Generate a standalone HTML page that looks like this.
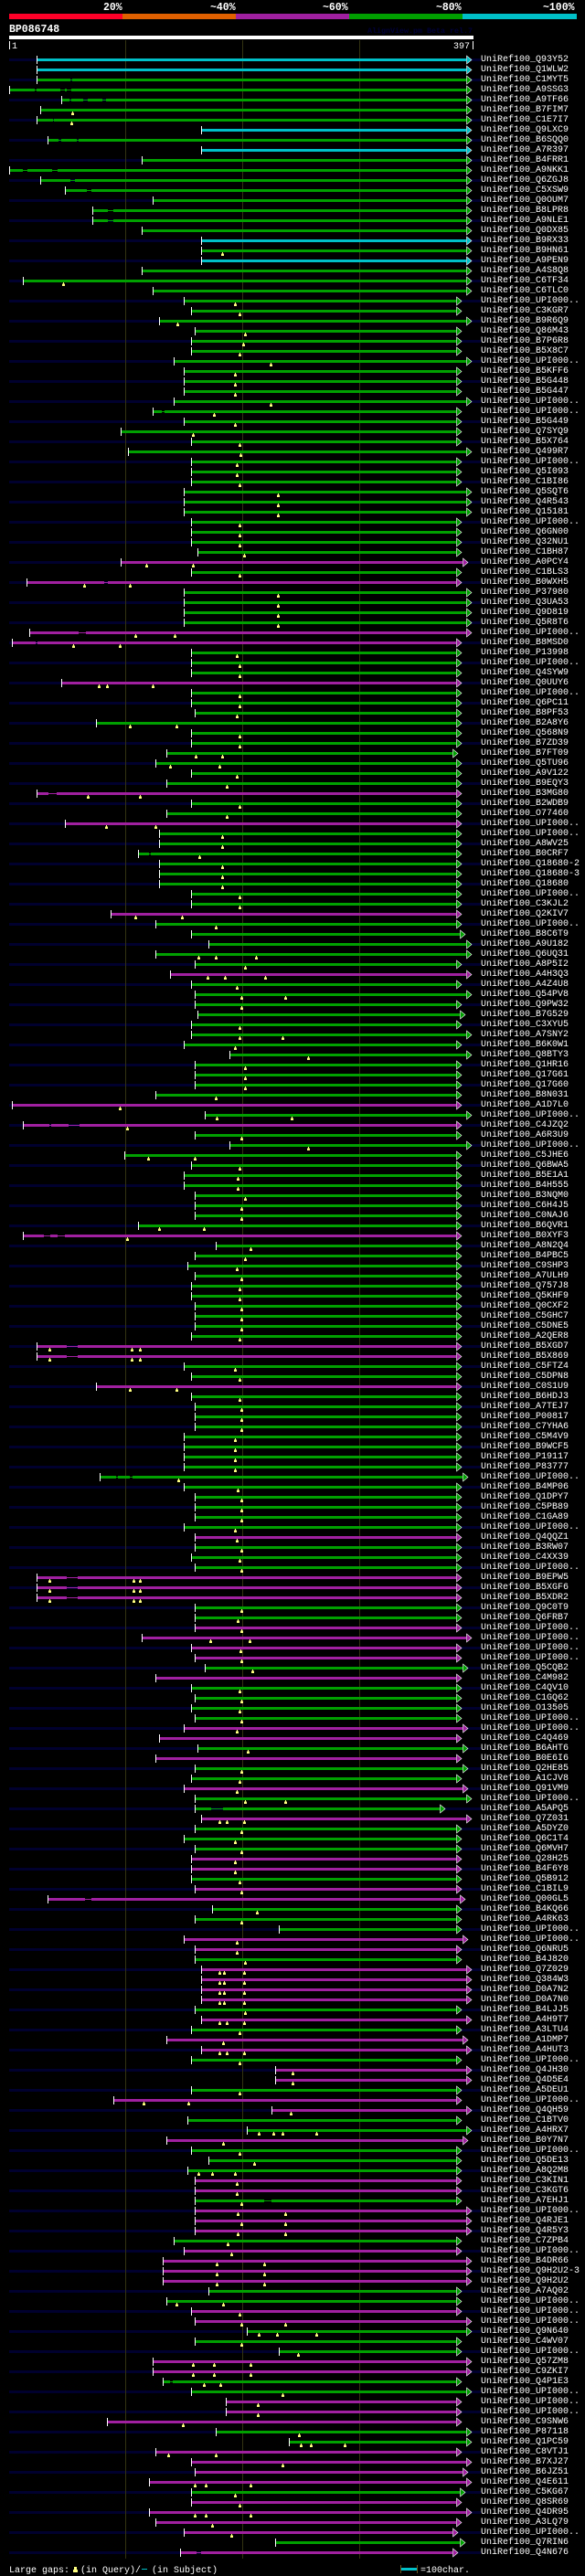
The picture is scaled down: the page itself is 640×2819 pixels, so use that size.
<!DOCTYPE html>
<html><head><meta charset="utf-8"><title>BP086748</title>
<style>
html,body{margin:0;padding:0;background:#000}
#p{position:relative;width:640px;height:2819px;overflow:hidden;background:#000}
#nv{position:absolute;left:10px;top:64px;width:516px;height:2732px;background:repeating-linear-gradient(to bottom,#00002e 0,#00002e 3px,transparent 3px,transparent 22px)}
svg{position:absolute;left:0;top:0}
.g,.m,.c{stroke:currentColor;stroke-width:3;fill:none}
.g{color:#00a000}.m{color:#a020a0}.c{color:#00c0c8}
.n{stroke-width:1}
text{font-family:"Liberation Mono",monospace;fill:#fff;font-size:10px}
.b{font-weight:bold;font-size:11.5px}
pre{position:absolute;left:526px;top:60px;margin:0;font:10px/11px "Liberation Mono",monospace;color:#fff}
</style></head><body><div id="p">
<div id="nv"></div>
<svg width="640" height="2819">
<defs>
<path id="t" d="M.5-4.5v9" stroke="#fff" stroke-width="1"/>
<path id="a" d="M.5-4.5V4.5L6 0Z" fill="currentColor" stroke="#fff" stroke-width=".6"/>
<path id="y" d="M-1 5.5h3V3h-1V1.5h-1V3h-1z" fill="#ffff80" stroke="none"/>
</defs>
<rect x="10" y="15" width="124" height="6" fill="#ff0028"/>
<rect x="134" y="15" width="124" height="6" fill="#e06000"/>
<rect x="258" y="15" width="124" height="6" fill="#a020a0"/>
<rect x="382" y="15" width="124" height="6" fill="#00a000"/>
<rect x="506" y="15" width="125" height="6" fill="#00c0c8"/>
<text class="b" x="113" y="11">20%</text>
<text class="b" x="230" y="11">~40%</text>
<text class="b" x="353" y="11">~60%</text>
<text class="b" x="477" y="11">~80%</text>
<text class="b" x="594" y="11">~100%</text>
<text class="b" x="10" y="35">BP086748</text>
<text x="402" y="36" style="font-size:8.33px;font-weight:bold;fill:#00003a">AlignView.pm Beta rel.7</text>
<rect x="10" y="39" width="508" height="4" fill="#fff"/>
<rect x="10" y="45" width="1" height="9" fill="#fff"/>
<text x="13" y="53">1</text>
<text x="496" y="53">397</text>
<rect x="517" y="45" width="1" height="9" fill="#fff"/>
<rect x="137" y="44" width="1" height="2756" fill="#333311"/>
<rect x="265" y="44" width="1" height="2756" fill="#333311"/>
<rect x="393" y="44" width="1" height="2756" fill="#333311"/>

<g class=c transform=translate(0,65.5)><path d="M41 0H510"/><use href=#t x=40 /><use href=#a x=510 /></g>
<g class=c transform=translate(0,76.5)><path d="M41 0H510"/><use href=#t x=40 /><use href=#a x=510 /></g>
<g class=g transform=translate(0,87.5)><path d="M41 0H77M79 0H510"/><path class=n d="M77 0H79"/><use href=#t x=40 /><use href=#a x=510 /></g>
<g class=g transform=translate(0,98.5)><path d="M11 0H38M40 0H66M71 0H73M78 0H510"/><path class=n d="M38 0H40M66 0H71M73 0H78"/><use href=#t x=10 /><use href=#a x=510 /></g>
<g class=g transform=translate(0,109.5)><path d="M68 0H76M78 0H91M96 0H112M116 0H510"/><path class=n d="M76 0H78M91 0H96M112 0H116"/><use href=#t x=67 /><use href=#a x=510 /></g>
<g class=g transform=translate(0,120.5)><path d="M45 0H510"/><use href=#t x=44 /><use href=#a x=510 /><use href=#y x=79 /></g>
<g class=g transform=translate(0,131.5)><path d="M41 0H58M59 0H510"/><path class=n d="M58 0H59"/><use href=#t x=40 /><use href=#a x=510 /><use href=#y x=78 /></g>
<g class=c transform=translate(0,142.5)><path d="M221 0H510"/><use href=#t x=220 /><use href=#a x=510 /></g>
<g class=g transform=translate(0,153.5)><path d="M53 0H64M67 0H84M86 0H510"/><path class=n d="M64 0H67M84 0H86"/><use href=#t x=52 /><use href=#a x=510 /></g>
<g class=c transform=translate(0,164.5)><path d="M221 0H510"/><use href=#t x=220 /><use href=#a x=510 /></g>
<g class=g transform=translate(0,175.5)><path d="M156 0H510"/><use href=#t x=155 /><use href=#a x=510 /></g>
<g class=g transform=translate(0,186.5)><path d="M11 0H25M30 0H57M63 0H510"/><path class=n d="M25 0H30M57 0H63"/><use href=#t x=10 /><use href=#a x=510 /></g>
<g class=g transform=translate(0,197.5)><path d="M45 0H77M82 0H510"/><path class=n d="M77 0H82"/><use href=#t x=44 /><use href=#a x=510 /></g>
<g class=g transform=translate(0,208.5)><path d="M72 0H95M100 0H510"/><path class=n d="M95 0H100"/><use href=#t x=71 /><use href=#a x=510 /></g>
<g class=g transform=translate(0,219.5)><path d="M168 0H510"/><use href=#t x=167 /><use href=#a x=510 /></g>
<g class=g transform=translate(0,230.5)><path d="M102 0H118M124 0H510"/><path class=n d="M118 0H124"/><use href=#t x=101 /><use href=#a x=510 /></g>
<g class=g transform=translate(0,241.5)><path d="M102 0H118M124 0H510"/><path class=n d="M118 0H124"/><use href=#t x=101 /><use href=#a x=510 /></g>
<g class=g transform=translate(0,252.5)><path d="M156 0H510"/><use href=#t x=155 /><use href=#a x=510 /></g>
<g class=c transform=translate(0,263.5)><path d="M221 0H510"/><use href=#t x=220 /><use href=#a x=510 /></g>
<g class=g transform=translate(0,274.5)><path d="M221 0H510"/><use href=#t x=220 /><use href=#a x=510 /><use href=#y x=243 /></g>
<g class=c transform=translate(0,285.5)><path d="M221 0H510"/><use href=#t x=220 /><use href=#a x=510 /></g>
<g class=g transform=translate(0,296.5)><path d="M156 0H510"/><use href=#t x=155 /><use href=#a x=510 /></g>
<g class=g transform=translate(0,307.5)><path d="M26 0H510"/><use href=#t x=25 /><use href=#a x=510 /><use href=#y x=69 /></g>
<g class=g transform=translate(0,318.5)><path d="M168 0H510"/><use href=#t x=167 /><use href=#a x=510 /></g>
<g class=g transform=translate(0,329.5)><path d="M202 0H499"/><use href=#t x=201 /><use href=#a x=499 /><use href=#y x=257 /></g>
<g class=g transform=translate(0,340.5)><path d="M210 0H499"/><use href=#t x=209 /><use href=#a x=499 /><use href=#y x=262 /></g>
<g class=g transform=translate(0,351.5)><path d="M175 0H510"/><use href=#t x=174 /><use href=#a x=510 /><use href=#y x=194 /></g>
<g class=g transform=translate(0,362.5)><path d="M214 0H499"/><use href=#t x=213 /><use href=#a x=499 /><use href=#y x=268 /></g>
<g class=g transform=translate(0,373.5)><path d="M210 0H499"/><use href=#t x=209 /><use href=#a x=499 /><use href=#y x=266 /></g>
<g class=g transform=translate(0,384.5)><path d="M210 0H499"/><use href=#t x=209 /><use href=#a x=499 /><use href=#y x=262 /></g>
<g class=g transform=translate(0,395.5)><path d="M191 0H510"/><use href=#t x=190 /><use href=#a x=510 /><use href=#y x=296 /></g>
<g class=g transform=translate(0,406.5)><path d="M202 0H499"/><use href=#t x=201 /><use href=#a x=499 /><use href=#y x=257 /></g>
<g class=g transform=translate(0,417.5)><path d="M202 0H499"/><use href=#t x=201 /><use href=#a x=499 /><use href=#y x=257 /></g>
<g class=g transform=translate(0,428.5)><path d="M202 0H499"/><use href=#t x=201 /><use href=#a x=499 /><use href=#y x=257 /></g>
<g class=g transform=translate(0,439.5)><path d="M191 0H510"/><use href=#t x=190 /><use href=#a x=510 /><use href=#y x=296 /></g>
<g class=g transform=translate(0,450.5)><path d="M168 0H177M180 0H499"/><path class=n d="M177 0H180"/><use href=#t x=167 /><use href=#a x=499 /><use href=#y x=234 /></g>
<g class=g transform=translate(0,461.5)><path d="M202 0H499"/><use href=#t x=201 /><use href=#a x=499 /><use href=#y x=257 /></g>
<g class=g transform=translate(0,472.5)><path d="M133 0H499"/><use href=#t x=132 /><use href=#a x=499 /><use href=#y x=211 /></g>
<g class=g transform=translate(0,483.5)><path d="M210 0H499"/><use href=#t x=209 /><use href=#a x=499 /><use href=#y x=262 /></g>
<g class=g transform=translate(0,494.5)><path d="M141 0H510"/><use href=#t x=140 /><use href=#a x=510 /><use href=#y x=263 /></g>
<g class=g transform=translate(0,505.5)><path d="M210 0H499"/><use href=#t x=209 /><use href=#a x=499 /><use href=#y x=259 /></g>
<g class=g transform=translate(0,516.5)><path d="M210 0H499"/><use href=#t x=209 /><use href=#a x=499 /><use href=#y x=259 /></g>
<g class=g transform=translate(0,527.5)><path d="M210 0H499"/><use href=#t x=209 /><use href=#a x=499 /><use href=#y x=262 /></g>
<g class=g transform=translate(0,538.5)><path d="M202 0H510"/><use href=#t x=201 /><use href=#a x=510 /><use href=#y x=304 /></g>
<g class=g transform=translate(0,549.5)><path d="M202 0H510"/><use href=#t x=201 /><use href=#a x=510 /><use href=#y x=304 /></g>
<g class=g transform=translate(0,560.5)><path d="M202 0H510"/><use href=#t x=201 /><use href=#a x=510 /><use href=#y x=304 /></g>
<g class=g transform=translate(0,571.5)><path d="M210 0H499"/><use href=#t x=209 /><use href=#a x=499 /><use href=#y x=262 /></g>
<g class=g transform=translate(0,582.5)><path d="M210 0H499"/><use href=#t x=209 /><use href=#a x=499 /><use href=#y x=262 /></g>
<g class=g transform=translate(0,593.5)><path d="M210 0H499"/><use href=#t x=209 /><use href=#a x=499 /><use href=#y x=262 /></g>
<g class=g transform=translate(0,604.5)><path d="M217 0H499"/><use href=#t x=216 /><use href=#a x=499 /><use href=#y x=267 /></g>
<g class=m transform=translate(0,615.5)><path d="M133 0H506"/><use href=#t x=132 /><use href=#a x=506 /><use href=#y x=160 /><use href=#y x=211 /></g>
<g class=g transform=translate(0,626.5)><path d="M210 0H499"/><use href=#t x=209 /><use href=#a x=499 /><use href=#y x=262 /></g>
<g class=m transform=translate(0,637.5)><path d="M30 0H114M118 0H499"/><path class=n d="M114 0H118"/><use href=#t x=29 /><use href=#a x=499 /><use href=#y x=92 /><use href=#y x=142 /></g>
<g class=g transform=translate(0,648.5)><path d="M202 0H510"/><use href=#t x=201 /><use href=#a x=510 /><use href=#y x=304 /></g>
<g class=g transform=translate(0,659.5)><path d="M202 0H510"/><use href=#t x=201 /><use href=#a x=510 /><use href=#y x=304 /></g>
<g class=g transform=translate(0,670.5)><path d="M202 0H510"/><use href=#t x=201 /><use href=#a x=510 /><use href=#y x=304 /></g>
<g class=g transform=translate(0,681.5)><path d="M202 0H510"/><use href=#t x=201 /><use href=#a x=510 /><use href=#y x=304 /></g>
<g class=m transform=translate(0,692.5)><path d="M33 0H86M94 0H510"/><path class=n d="M86 0H94"/><use href=#t x=32 /><use href=#a x=510 /><use href=#y x=148 /><use href=#y x=191 /></g>
<g class=m transform=translate(0,703.5)><path d="M14 0H39M41 0H499"/><path class=n d="M39 0H41"/><use href=#t x=13 /><use href=#a x=499 /><use href=#y x=80 /><use href=#y x=131 /></g>
<g class=g transform=translate(0,714.5)><path d="M210 0H499"/><use href=#t x=209 /><use href=#a x=499 /><use href=#y x=259 /></g>
<g class=g transform=translate(0,725.5)><path d="M210 0H499"/><use href=#t x=209 /><use href=#a x=499 /><use href=#y x=262 /></g>
<g class=g transform=translate(0,736.5)><path d="M210 0H499"/><use href=#t x=209 /><use href=#a x=499 /><use href=#y x=262 /></g>
<g class=m transform=translate(0,747.5)><path d="M68 0H499"/><use href=#t x=67 /><use href=#a x=499 /><use href=#y x=108 /><use href=#y x=117 /><use href=#y x=167 /></g>
<g class=g transform=translate(0,758.5)><path d="M210 0H499"/><use href=#t x=209 /><use href=#a x=499 /><use href=#y x=262 /></g>
<g class=g transform=translate(0,769.5)><path d="M210 0H499"/><use href=#t x=209 /><use href=#a x=499 /><use href=#y x=262 /></g>
<g class=g transform=translate(0,780.5)><path d="M214 0H499"/><use href=#t x=213 /><use href=#a x=499 /><use href=#y x=259 /></g>
<g class=g transform=translate(0,791.5)><path d="M106 0H499"/><use href=#t x=105 /><use href=#a x=499 /><use href=#y x=142 /><use href=#y x=193 /></g>
<g class=g transform=translate(0,802.5)><path d="M210 0H499"/><use href=#t x=209 /><use href=#a x=499 /><use href=#y x=262 /></g>
<g class=g transform=translate(0,813.5)><path d="M210 0H499"/><use href=#t x=209 /><use href=#a x=499 /><use href=#y x=262 /></g>
<g class=g transform=translate(0,824.5)><path d="M183 0H495"/><use href=#t x=182 /><use href=#a x=495 /><use href=#y x=214 /><use href=#y x=243 /></g>
<g class=g transform=translate(0,835.5)><path d="M171 0H499"/><use href=#t x=170 /><use href=#a x=499 /><use href=#y x=186 /><use href=#y x=240 /></g>
<g class=g transform=translate(0,846.5)><path d="M210 0H499"/><use href=#t x=209 /><use href=#a x=499 /><use href=#y x=259 /></g>
<g class=g transform=translate(0,857.5)><path d="M183 0H499"/><use href=#t x=182 /><use href=#a x=499 /><use href=#y x=248 /></g>
<g class=m transform=translate(0,868.5)><path d="M41 0H53M62 0H499"/><path class=n d="M53 0H62"/><use href=#t x=40 /><use href=#a x=499 /><use href=#y x=96 /><use href=#y x=153 /></g>
<g class=g transform=translate(0,879.5)><path d="M210 0H499"/><use href=#t x=209 /><use href=#a x=499 /><use href=#y x=262 /></g>
<g class=g transform=translate(0,890.5)><path d="M183 0H499"/><use href=#t x=182 /><use href=#a x=499 /><use href=#y x=248 /></g>
<g class=m transform=translate(0,901.5)><path d="M72 0H499"/><use href=#t x=71 /><use href=#a x=499 /><use href=#y x=116 /><use href=#y x=170 /></g>
<g class=g transform=translate(0,912.5)><path d="M175 0H499"/><use href=#t x=174 /><use href=#a x=499 /><use href=#y x=243 /></g>
<g class=g transform=translate(0,923.5)><path d="M175 0H499"/><use href=#t x=174 /><use href=#a x=499 /><use href=#y x=243 /></g>
<g class=g transform=translate(0,934.5)><path d="M152 0H163M165 0H499"/><path class=n d="M163 0H165"/><use href=#t x=151 /><use href=#a x=499 /><use href=#y x=218 /></g>
<g class=g transform=translate(0,945.5)><path d="M175 0H499"/><use href=#t x=174 /><use href=#a x=499 /><use href=#y x=243 /></g>
<g class=g transform=translate(0,956.5)><path d="M175 0H499"/><use href=#t x=174 /><use href=#a x=499 /><use href=#y x=243 /></g>
<g class=g transform=translate(0,967.5)><path d="M175 0H499"/><use href=#t x=174 /><use href=#a x=499 /><use href=#y x=243 /></g>
<g class=g transform=translate(0,978.5)><path d="M210 0H499"/><use href=#t x=209 /><use href=#a x=499 /><use href=#y x=262 /></g>
<g class=g transform=translate(0,989.5)><path d="M210 0H499"/><use href=#t x=209 /><use href=#a x=499 /><use href=#y x=262 /></g>
<g class=m transform=translate(0,1000.5)><path d="M122 0H499"/><use href=#t x=121 /><use href=#a x=499 /><use href=#y x=148 /><use href=#y x=199 /></g>
<g class=g transform=translate(0,1011.5)><path d="M171 0H499"/><use href=#t x=170 /><use href=#a x=499 /><use href=#y x=236 /></g>
<g class=g transform=translate(0,1022.5)><path d="M210 0H503"/><use href=#t x=209 /><use href=#a x=503 /></g>
<g class=g transform=translate(0,1033.5)><path d="M229 0H510"/><use href=#t x=228 /><use href=#a x=510 /></g>
<g class=g transform=translate(0,1044.5)><path d="M171 0H510"/><use href=#t x=170 /><use href=#a x=510 /><use href=#y x=217 /><use href=#y x=236 /><use href=#y x=280 /></g>
<g class=g transform=translate(0,1055.5)><path d="M214 0H499"/><use href=#t x=213 /><use href=#a x=499 /><use href=#y x=268 /></g>
<g class=m transform=translate(0,1066.5)><path d="M187 0H510"/><use href=#t x=186 /><use href=#a x=510 /><use href=#y x=227 /><use href=#y x=246 /><use href=#y x=290 /></g>
<g class=g transform=translate(0,1077.5)><path d="M210 0H499"/><use href=#t x=209 /><use href=#a x=499 /><use href=#y x=259 /></g>
<g class=g transform=translate(0,1088.5)><path d="M214 0H510"/><use href=#t x=213 /><use href=#a x=510 /><use href=#y x=264 /><use href=#y x=312 /></g>
<g class=g transform=translate(0,1099.5)><path d="M214 0H499"/><use href=#t x=213 /><use href=#a x=499 /><use href=#y x=264 /></g>
<g class=g transform=translate(0,1110.5)><path d="M217 0H503"/><use href=#t x=216 /><use href=#a x=503 /></g>
<g class=g transform=translate(0,1121.5)><path d="M210 0H499"/><use href=#t x=209 /><use href=#a x=499 /><use href=#y x=262 /></g>
<g class=g transform=translate(0,1132.5)><path d="M210 0H510"/><use href=#t x=209 /><use href=#a x=510 /><use href=#y x=262 /><use href=#y x=309 /></g>
<g class=g transform=translate(0,1143.5)><path d="M202 0H499"/><use href=#t x=201 /><use href=#a x=499 /><use href=#y x=257 /></g>
<g class=g transform=translate(0,1154.5)><path d="M252 0H510"/><use href=#t x=251 /><use href=#a x=510 /><use href=#y x=337 /></g>
<g class=g transform=translate(0,1165.5)><path d="M214 0H499"/><use href=#t x=213 /><use href=#a x=499 /><use href=#y x=268 /></g>
<g class=g transform=translate(0,1176.5)><path d="M214 0H499"/><use href=#t x=213 /><use href=#a x=499 /><use href=#y x=268 /></g>
<g class=g transform=translate(0,1187.5)><path d="M214 0H499"/><use href=#t x=213 /><use href=#a x=499 /><use href=#y x=268 /></g>
<g class=g transform=translate(0,1198.5)><path d="M171 0H499"/><use href=#t x=170 /><use href=#a x=499 /><use href=#y x=236 /></g>
<g class=m transform=translate(0,1209.5)><path d="M14 0H499"/><use href=#t x=13 /><use href=#a x=499 /><use href=#y x=131 /></g>
<g class=g transform=translate(0,1220.5)><path d="M225 0H510"/><use href=#t x=224 /><use href=#a x=510 /><use href=#y x=237 /><use href=#y x=319 /></g>
<g class=m transform=translate(0,1231.5)><path d="M26 0H54M56 0H75M87 0H499"/><path class=n d="M54 0H56M75 0H87"/><use href=#t x=25 /><use href=#a x=499 /><use href=#y x=139 /></g>
<g class=g transform=translate(0,1242.5)><path d="M214 0H499"/><use href=#t x=213 /><use href=#a x=499 /><use href=#y x=264 /></g>
<g class=g transform=translate(0,1253.5)><path d="M252 0H510"/><use href=#t x=251 /><use href=#a x=510 /><use href=#y x=337 /></g>
<g class=g transform=translate(0,1264.5)><path d="M137 0H499"/><use href=#t x=136 /><use href=#a x=499 /><use href=#y x=162 /><use href=#y x=213 /></g>
<g class=g transform=translate(0,1275.5)><path d="M210 0H499"/><use href=#t x=209 /><use href=#a x=499 /><use href=#y x=262 /></g>
<g class=g transform=translate(0,1286.5)><path d="M202 0H499"/><use href=#t x=201 /><use href=#a x=499 /><use href=#y x=260 /></g>
<g class=g transform=translate(0,1297.5)><path d="M202 0H499"/><use href=#t x=201 /><use href=#a x=499 /><use href=#y x=260 /></g>
<g class=g transform=translate(0,1308.5)><path d="M214 0H499"/><use href=#t x=213 /><use href=#a x=499 /><use href=#y x=268 /></g>
<g class=g transform=translate(0,1319.5)><path d="M214 0H499"/><use href=#t x=213 /><use href=#a x=499 /><use href=#y x=264 /></g>
<g class=g transform=translate(0,1330.5)><path d="M214 0H499"/><use href=#t x=213 /><use href=#a x=499 /><use href=#y x=264 /></g>
<g class=g transform=translate(0,1341.5)><path d="M152 0H499"/><use href=#t x=151 /><use href=#a x=499 /><use href=#y x=174 /><use href=#y x=223 /></g>
<g class=m transform=translate(0,1352.5)><path d="M26 0H48M55 0H63M71 0H499"/><path class=n d="M48 0H55M63 0H71"/><use href=#t x=25 /><use href=#a x=499 /><use href=#y x=139 /></g>
<g class=g transform=translate(0,1363.5)><path d="M237 0H499"/><use href=#t x=236 /><use href=#a x=499 /><use href=#y x=274 /></g>
<g class=g transform=translate(0,1374.5)><path d="M214 0H499"/><use href=#t x=213 /><use href=#a x=499 /><use href=#y x=268 /></g>
<g class=g transform=translate(0,1385.5)><path d="M206 0H499"/><use href=#t x=205 /><use href=#a x=499 /><use href=#y x=259 /></g>
<g class=g transform=translate(0,1396.5)><path d="M214 0H499"/><use href=#t x=213 /><use href=#a x=499 /><use href=#y x=264 /></g>
<g class=g transform=translate(0,1407.5)><path d="M210 0H499"/><use href=#t x=209 /><use href=#a x=499 /><use href=#y x=262 /></g>
<g class=g transform=translate(0,1418.5)><path d="M210 0H499"/><use href=#t x=209 /><use href=#a x=499 /><use href=#y x=262 /></g>
<g class=g transform=translate(0,1429.5)><path d="M214 0H499"/><use href=#t x=213 /><use href=#a x=499 /><use href=#y x=264 /></g>
<g class=g transform=translate(0,1440.5)><path d="M214 0H499"/><use href=#t x=213 /><use href=#a x=499 /><use href=#y x=264 /></g>
<g class=g transform=translate(0,1451.5)><path d="M214 0H499"/><use href=#t x=213 /><use href=#a x=499 /><use href=#y x=264 /></g>
<g class=g transform=translate(0,1462.5)><path d="M210 0H499"/><use href=#t x=209 /><use href=#a x=499 /><use href=#y x=262 /></g>
<g class=m transform=translate(0,1473.5)><path d="M41 0H73M85 0H499"/><path class=n d="M73 0H85"/><use href=#t x=40 /><use href=#a x=499 /><use href=#y x=54 /><use href=#y x=144 /><use href=#y x=153 /></g>
<g class=m transform=translate(0,1484.5)><path d="M41 0H73M85 0H499"/><path class=n d="M73 0H85"/><use href=#t x=40 /><use href=#a x=499 /><use href=#y x=54 /><use href=#y x=144 /><use href=#y x=153 /></g>
<g class=g transform=translate(0,1495.5)><path d="M202 0H499"/><use href=#t x=201 /><use href=#a x=499 /><use href=#y x=257 /></g>
<g class=g transform=translate(0,1506.5)><path d="M210 0H499"/><use href=#t x=209 /><use href=#a x=499 /><use href=#y x=262 /></g>
<g class=m transform=translate(0,1517.5)><path d="M106 0H499"/><use href=#t x=105 /><use href=#a x=499 /><use href=#y x=142 /><use href=#y x=193 /></g>
<g class=g transform=translate(0,1528.5)><path d="M210 0H499"/><use href=#t x=209 /><use href=#a x=499 /><use href=#y x=262 /></g>
<g class=g transform=translate(0,1539.5)><path d="M214 0H499"/><use href=#t x=213 /><use href=#a x=499 /><use href=#y x=264 /></g>
<g class=g transform=translate(0,1550.5)><path d="M214 0H499"/><use href=#t x=213 /><use href=#a x=499 /><use href=#y x=264 /></g>
<g class=g transform=translate(0,1561.5)><path d="M214 0H499"/><use href=#t x=213 /><use href=#a x=499 /><use href=#y x=264 /></g>
<g class=g transform=translate(0,1572.5)><path d="M202 0H499"/><use href=#t x=201 /><use href=#a x=499 /><use href=#y x=257 /></g>
<g class=g transform=translate(0,1583.5)><path d="M202 0H499"/><use href=#t x=201 /><use href=#a x=499 /><use href=#y x=257 /></g>
<g class=g transform=translate(0,1594.5)><path d="M202 0H499"/><use href=#t x=201 /><use href=#a x=499 /><use href=#y x=257 /></g>
<g class=g transform=translate(0,1605.5)><path d="M202 0H499"/><use href=#t x=201 /><use href=#a x=499 /><use href=#y x=257 /></g>
<g class=g transform=translate(0,1616.5)><path d="M110 0H127M129 0H142M145 0H506"/><path class=n d="M127 0H129M142 0H145"/><use href=#t x=109 /><use href=#a x=506 /><use href=#y x=195 /></g>
<g class=g transform=translate(0,1627.5)><path d="M202 0H499"/><use href=#t x=201 /><use href=#a x=499 /><use href=#y x=260 /></g>
<g class=g transform=translate(0,1638.5)><path d="M214 0H499"/><use href=#t x=213 /><use href=#a x=499 /><use href=#y x=264 /></g>
<g class=g transform=translate(0,1649.5)><path d="M214 0H499"/><use href=#t x=213 /><use href=#a x=499 /><use href=#y x=264 /></g>
<g class=g transform=translate(0,1660.5)><path d="M214 0H499"/><use href=#t x=213 /><use href=#a x=499 /><use href=#y x=264 /></g>
<g class=g transform=translate(0,1671.5)><path d="M202 0H499"/><use href=#t x=201 /><use href=#a x=499 /><use href=#y x=257 /></g>
<g class=m transform=translate(0,1682.5)><path d="M214 0H499"/><use href=#t x=213 /><use href=#a x=499 /><use href=#y x=259 /></g>
<g class=g transform=translate(0,1693.5)><path d="M214 0H499"/><use href=#t x=213 /><use href=#a x=499 /><use href=#y x=264 /></g>
<g class=g transform=translate(0,1704.5)><path d="M210 0H499"/><use href=#t x=209 /><use href=#a x=499 /><use href=#y x=262 /></g>
<g class=g transform=translate(0,1715.5)><path d="M214 0H499"/><use href=#t x=213 /><use href=#a x=499 /><use href=#y x=264 /></g>
<g class=m transform=translate(0,1726.5)><path d="M41 0H73M85 0H499"/><path class=n d="M73 0H85"/><use href=#t x=40 /><use href=#a x=499 /><use href=#y x=54 /><use href=#y x=146 /><use href=#y x=153 /></g>
<g class=m transform=translate(0,1737.5)><path d="M41 0H73M85 0H499"/><path class=n d="M73 0H85"/><use href=#t x=40 /><use href=#a x=499 /><use href=#y x=54 /><use href=#y x=146 /><use href=#y x=153 /></g>
<g class=m transform=translate(0,1748.5)><path d="M41 0H73M85 0H499"/><path class=n d="M73 0H85"/><use href=#t x=40 /><use href=#a x=499 /><use href=#y x=54 /><use href=#y x=146 /><use href=#y x=153 /></g>
<g class=g transform=translate(0,1759.5)><path d="M214 0H499"/><use href=#t x=213 /><use href=#a x=499 /><use href=#y x=264 /></g>
<g class=g transform=translate(0,1770.5)><path d="M214 0H499"/><use href=#t x=213 /><use href=#a x=499 /><use href=#y x=260 /></g>
<g class=m transform=translate(0,1781.5)><path d="M214 0H499"/><use href=#t x=213 /><use href=#a x=499 /><use href=#y x=264 /></g>
<g class=m transform=translate(0,1792.5)><path d="M156 0H510"/><use href=#t x=155 /><use href=#a x=510 /><use href=#y x=230 /><use href=#y x=273 /></g>
<g class=m transform=translate(0,1803.5)><path d="M210 0H499"/><use href=#t x=209 /><use href=#a x=499 /><use href=#y x=263 /></g>
<g class=m transform=translate(0,1814.5)><path d="M214 0H499"/><use href=#t x=213 /><use href=#a x=499 /><use href=#y x=264 /></g>
<g class=g transform=translate(0,1825.5)><path d="M225 0H506"/><use href=#t x=224 /><use href=#a x=506 /><use href=#y x=276 /></g>
<g class=m transform=translate(0,1836.5)><path d="M171 0H499"/><use href=#t x=170 /><use href=#a x=499 /></g>
<g class=g transform=translate(0,1847.5)><path d="M210 0H499"/><use href=#t x=209 /><use href=#a x=499 /><use href=#y x=262 /></g>
<g class=g transform=translate(0,1858.5)><path d="M214 0H499"/><use href=#t x=213 /><use href=#a x=499 /><use href=#y x=264 /></g>
<g class=g transform=translate(0,1869.5)><path d="M210 0H499"/><use href=#t x=209 /><use href=#a x=499 /><use href=#y x=262 /></g>
<g class=g transform=translate(0,1880.5)><path d="M214 0H499"/><use href=#t x=213 /><use href=#a x=499 /><use href=#y x=264 /></g>
<g class=m transform=translate(0,1891.5)><path d="M202 0H506"/><use href=#t x=201 /><use href=#a x=506 /><use href=#y x=259 /></g>
<g class=m transform=translate(0,1902.5)><path d="M175 0H499"/><use href=#t x=174 /><use href=#a x=499 /></g>
<g class=g transform=translate(0,1913.5)><path d="M217 0H506"/><use href=#t x=216 /><use href=#a x=506 /><use href=#y x=271 /></g>
<g class=m transform=translate(0,1924.5)><path d="M171 0H499"/><use href=#t x=170 /><use href=#a x=499 /></g>
<g class=g transform=translate(0,1935.5)><path d="M214 0H506"/><use href=#t x=213 /><use href=#a x=506 /><use href=#y x=264 /></g>
<g class=g transform=translate(0,1946.5)><path d="M210 0H499"/><use href=#t x=209 /><use href=#a x=499 /><use href=#y x=262 /></g>
<g class=m transform=translate(0,1957.5)><path d="M202 0H506"/><use href=#t x=201 /><use href=#a x=506 /><use href=#y x=259 /></g>
<g class=g transform=translate(0,1968.5)><path d="M214 0H510"/><use href=#t x=213 /><use href=#a x=510 /><use href=#y x=268 /><use href=#y x=312 /></g>
<g class=g transform=translate(0,1979.5)><path d="M214 0H231M244 0H481"/><path class=n d="M231 0H244"/><use href=#t x=213 /><use href=#a x=481 /></g>
<g class=m transform=translate(0,1990.5)><path d="M221 0H510"/><use href=#t x=220 /><use href=#a x=510 /><use href=#y x=240 /><use href=#y x=248 /><use href=#y x=267 /></g>
<g class=g transform=translate(0,2001.5)><path d="M214 0H499"/><use href=#t x=213 /><use href=#a x=499 /><use href=#y x=264 /></g>
<g class=g transform=translate(0,2012.5)><path d="M202 0H499"/><use href=#t x=201 /><use href=#a x=499 /><use href=#y x=257 /></g>
<g class=g transform=translate(0,2023.5)><path d="M214 0H499"/><use href=#t x=213 /><use href=#a x=499 /><use href=#y x=264 /></g>
<g class=m transform=translate(0,2034.5)><path d="M210 0H499"/><use href=#t x=209 /><use href=#a x=499 /><use href=#y x=257 /></g>
<g class=m transform=translate(0,2045.5)><path d="M210 0H499"/><use href=#t x=209 /><use href=#a x=499 /><use href=#y x=257 /></g>
<g class=g transform=translate(0,2056.5)><path d="M210 0H499"/><use href=#t x=209 /><use href=#a x=499 /><use href=#y x=262 /></g>
<g class=m transform=translate(0,2067.5)><path d="M214 0H499"/><use href=#t x=213 /><use href=#a x=499 /><use href=#y x=264 /></g>
<g class=m transform=translate(0,2078.5)><path d="M53 0H93M100 0H503"/><path class=n d="M93 0H100"/><use href=#t x=52 /><use href=#a x=503 /></g>
<g class=g transform=translate(0,2089.5)><path d="M233 0H499"/><use href=#t x=232 /><use href=#a x=499 /><use href=#y x=281 /></g>
<g class=g transform=translate(0,2100.5)><path d="M214 0H499"/><use href=#t x=213 /><use href=#a x=499 /><use href=#y x=264 /></g>
<g class=g transform=translate(0,2111.5)><path d="M306 0H499"/><use href=#t x=305 /><use href=#a x=499 /></g>
<g class=m transform=translate(0,2122.5)><path d="M202 0H506"/><use href=#t x=201 /><use href=#a x=506 /><use href=#y x=259 /></g>
<g class=m transform=translate(0,2133.5)><path d="M214 0H499"/><use href=#t x=213 /><use href=#a x=499 /><use href=#y x=259 /></g>
<g class=g transform=translate(0,2144.5)><path d="M214 0H499"/><use href=#t x=213 /><use href=#a x=499 /><use href=#y x=268 /></g>
<g class=m transform=translate(0,2155.5)><path d="M221 0H510"/><use href=#t x=220 /><use href=#a x=510 /><use href=#y x=240 /><use href=#y x=245 /><use href=#y x=267 /></g>
<g class=m transform=translate(0,2166.5)><path d="M221 0H510"/><use href=#t x=220 /><use href=#a x=510 /><use href=#y x=240 /><use href=#y x=245 /><use href=#y x=267 /></g>
<g class=m transform=translate(0,2177.5)><path d="M221 0H510"/><use href=#t x=220 /><use href=#a x=510 /><use href=#y x=240 /><use href=#y x=245 /><use href=#y x=267 /></g>
<g class=m transform=translate(0,2188.5)><path d="M221 0H510"/><use href=#t x=220 /><use href=#a x=510 /><use href=#y x=240 /><use href=#y x=245 /><use href=#y x=267 /></g>
<g class=g transform=translate(0,2199.5)><path d="M214 0H499"/><use href=#t x=213 /><use href=#a x=499 /><use href=#y x=268 /></g>
<g class=m transform=translate(0,2210.5)><path d="M221 0H510"/><use href=#t x=220 /><use href=#a x=510 /><use href=#y x=240 /><use href=#y x=248 /><use href=#y x=267 /></g>
<g class=g transform=translate(0,2221.5)><path d="M210 0H499"/><use href=#t x=209 /><use href=#a x=499 /><use href=#y x=262 /></g>
<g class=m transform=translate(0,2232.5)><path d="M183 0H506"/><use href=#t x=182 /><use href=#a x=506 /><use href=#y x=244 /></g>
<g class=m transform=translate(0,2243.5)><path d="M221 0H510"/><use href=#t x=220 /><use href=#a x=510 /><use href=#y x=240 /><use href=#y x=248 /><use href=#y x=267 /></g>
<g class=g transform=translate(0,2254.5)><path d="M210 0H499"/><use href=#t x=209 /><use href=#a x=499 /><use href=#y x=262 /></g>
<g class=m transform=translate(0,2265.5)><path d="M302 0H510"/><use href=#t x=301 /><use href=#a x=510 /><use href=#y x=320 /></g>
<g class=m transform=translate(0,2276.5)><path d="M302 0H510"/><use href=#t x=301 /><use href=#a x=510 /><use href=#y x=320 /></g>
<g class=g transform=translate(0,2287.5)><path d="M210 0H499"/><use href=#t x=209 /><use href=#a x=499 /><use href=#y x=262 /></g>
<g class=m transform=translate(0,2298.5)><path d="M125 0H499"/><use href=#t x=124 /><use href=#a x=499 /><use href=#y x=157 /><use href=#y x=206 /></g>
<g class=m transform=translate(0,2309.5)><path d="M298 0H510"/><use href=#t x=297 /><use href=#a x=510 /><use href=#y x=318 /></g>
<g class=g transform=translate(0,2320.5)><path d="M206 0H499"/><use href=#t x=205 /><use href=#a x=499 /></g>
<g class=g transform=translate(0,2331.5)><path d="M271 0H510"/><use href=#t x=270 /><use href=#a x=510 /><use href=#y x=283 /><use href=#y x=299 /><use href=#y x=309 /><use href=#y x=346 /></g>
<g class=m transform=translate(0,2342.5)><path d="M183 0H506"/><use href=#t x=182 /><use href=#a x=506 /><use href=#y x=244 /></g>
<g class=g transform=translate(0,2353.5)><path d="M210 0H499"/><use href=#t x=209 /><use href=#a x=499 /><use href=#y x=262 /></g>
<g class=g transform=translate(0,2364.5)><path d="M229 0H499"/><use href=#t x=228 /><use href=#a x=499 /><use href=#y x=278 /></g>
<g class=g transform=translate(0,2375.5)><path d="M206 0H499"/><use href=#t x=205 /><use href=#a x=499 /><use href=#y x=217 /><use href=#y x=232 /><use href=#y x=257 /></g>
<g class=m transform=translate(0,2386.5)><path d="M214 0H499"/><use href=#t x=213 /><use href=#a x=499 /><use href=#y x=259 /></g>
<g class=m transform=translate(0,2397.5)><path d="M214 0H499"/><use href=#t x=213 /><use href=#a x=499 /><use href=#y x=259 /></g>
<g class=g transform=translate(0,2408.5)><path d="M214 0H289M297 0H499"/><path class=n d="M289 0H297"/><use href=#t x=213 /><use href=#a x=499 /><use href=#y x=264 /></g>
<g class=m transform=translate(0,2419.5)><path d="M214 0H510"/><use href=#t x=213 /><use href=#a x=510 /><use href=#y x=260 /><use href=#y x=312 /></g>
<g class=m transform=translate(0,2430.5)><path d="M214 0H510"/><use href=#t x=213 /><use href=#a x=510 /><use href=#y x=264 /><use href=#y x=312 /></g>
<g class=m transform=translate(0,2441.5)><path d="M214 0H510"/><use href=#t x=213 /><use href=#a x=510 /><use href=#y x=260 /><use href=#y x=312 /></g>
<g class=g transform=translate(0,2452.5)><path d="M191 0H499"/><use href=#t x=190 /><use href=#a x=499 /><use href=#y x=249 /></g>
<g class=m transform=translate(0,2463.5)><path d="M202 0H499"/><use href=#t x=201 /><use href=#a x=499 /><use href=#y x=253 /></g>
<g class=m transform=translate(0,2474.5)><path d="M179 0H510"/><use href=#t x=178 /><use href=#a x=510 /><use href=#y x=237 /><use href=#y x=289 /></g>
<g class=m transform=translate(0,2485.5)><path d="M179 0H510"/><use href=#t x=178 /><use href=#a x=510 /><use href=#y x=237 /><use href=#y x=289 /></g>
<g class=m transform=translate(0,2496.5)><path d="M179 0H510"/><use href=#t x=178 /><use href=#a x=510 /><use href=#y x=237 /><use href=#y x=289 /></g>
<g class=g transform=translate(0,2507.5)><path d="M229 0H499"/><use href=#t x=228 /><use href=#a x=499 /></g>
<g class=g transform=translate(0,2518.5)><path d="M183 0H499"/><use href=#t x=182 /><use href=#a x=499 /><use href=#y x=193 /><use href=#y x=244 /></g>
<g class=m transform=translate(0,2529.5)><path d="M210 0H499"/><use href=#t x=209 /><use href=#a x=499 /><use href=#y x=262 /></g>
<g class=m transform=translate(0,2540.5)><path d="M214 0H510"/><use href=#t x=213 /><use href=#a x=510 /><use href=#y x=264 /><use href=#y x=312 /></g>
<g class=g transform=translate(0,2551.5)><path d="M271 0H510"/><use href=#t x=270 /><use href=#a x=510 /><use href=#y x=283 /><use href=#y x=303 /><use href=#y x=346 /></g>
<g class=g transform=translate(0,2562.5)><path d="M214 0H499"/><use href=#t x=213 /><use href=#a x=499 /><use href=#y x=264 /></g>
<g class=g transform=translate(0,2573.5)><path d="M306 0H499"/><use href=#t x=305 /><use href=#a x=499 /><use href=#y x=326 /></g>
<g class=m transform=translate(0,2584.5)><path d="M168 0H510"/><use href=#t x=167 /><use href=#a x=510 /><use href=#y x=211 /><use href=#y x=234 /><use href=#y x=274 /></g>
<g class=m transform=translate(0,2595.5)><path d="M168 0H510"/><use href=#t x=167 /><use href=#a x=510 /><use href=#y x=211 /><use href=#y x=234 /><use href=#y x=274 /></g>
<g class=g transform=translate(0,2606.5)><path d="M179 0H186M189 0H499"/><path class=n d="M186 0H189"/><use href=#t x=178 /><use href=#a x=499 /><use href=#y x=223 /><use href=#y x=241 /></g>
<g class=g transform=translate(0,2617.5)><path d="M210 0H510"/><use href=#t x=209 /><use href=#a x=510 /><use href=#y x=309 /></g>
<g class=m transform=translate(0,2628.5)><path d="M248 0H499"/><use href=#t x=247 /><use href=#a x=499 /><use href=#y x=282 /></g>
<g class=m transform=translate(0,2639.5)><path d="M248 0H499"/><use href=#t x=247 /><use href=#a x=499 /><use href=#y x=282 /></g>
<g class=m transform=translate(0,2650.5)><path d="M118 0H499"/><use href=#t x=117 /><use href=#a x=499 /><use href=#y x=200 /></g>
<g class=g transform=translate(0,2661.5)><path d="M237 0H510"/><use href=#t x=236 /><use href=#a x=510 /><use href=#y x=327 /></g>
<g class=g transform=translate(0,2672.5)><path d="M317 0H510"/><use href=#t x=316 /><use href=#a x=510 /><use href=#y x=329 /><use href=#y x=340 /><use href=#y x=377 /></g>
<g class=m transform=translate(0,2683.5)><path d="M171 0H499"/><use href=#t x=170 /><use href=#a x=499 /><use href=#y x=184 /><use href=#y x=236 /></g>
<g class=m transform=translate(0,2694.5)><path d="M210 0H510"/><use href=#t x=209 /><use href=#a x=510 /><use href=#y x=309 /></g>
<g class=m transform=translate(0,2705.5)><path d="M214 0H506"/><use href=#t x=213 /><use href=#a x=506 /></g>
<g class=m transform=translate(0,2716.5)><path d="M164 0H510"/><use href=#t x=163 /><use href=#a x=510 /><use href=#y x=213 /><use href=#y x=225 /><use href=#y x=274 /></g>
<g class=g transform=translate(0,2727.5)><path d="M210 0H503"/><use href=#t x=209 /><use href=#a x=503 /><use href=#y x=257 /></g>
<g class=m transform=translate(0,2738.5)><path d="M210 0H499"/><use href=#t x=209 /><use href=#a x=499 /><use href=#y x=262 /></g>
<g class=m transform=translate(0,2749.5)><path d="M164 0H510"/><use href=#t x=163 /><use href=#a x=510 /><use href=#y x=213 /><use href=#y x=225 /><use href=#y x=274 /></g>
<g class=m transform=translate(0,2760.5)><path d="M171 0H499"/><use href=#t x=170 /><use href=#a x=499 /><use href=#y x=232 /></g>
<g class=m transform=translate(0,2771.5)><path d="M202 0H495"/><use href=#t x=201 /><use href=#a x=495 /><use href=#y x=253 /></g>
<g class=g transform=translate(0,2782.5)><path d="M302 0H503"/><use href=#t x=301 /><use href=#a x=503 /></g>
<g class=m transform=translate(0,2793.5)><path d="M198 0H215M220 0H495"/><path class=n d="M215 0H220"/><use href=#t x=197 /><use href=#a x=495 /></g>

<text x="10" y="2815">Large gaps:</text>
<path d="M80 2815h5v-3h-1v-3h-3v3h-1z" fill="#ffff80"/>
<text x="88" y="2815">(in Query)/</text>
<rect x="155" y="2811" width="6" height="1" fill="#00c0c8"/>
<text x="166" y="2815">(in Subject)</text>
<rect x="438" y="2807" width="1" height="9" fill="#665522"/>
<rect x="456" y="2807" width="1" height="9" fill="#665522"/>
<rect x="439" y="2810" width="17" height="3" fill="#00c0c8"/>
<text x="460" y="2815">=100char.</text>
</svg>
<pre>UniRef100_Q93Y52
UniRef100_Q1WLW2
UniRef100_C1MYT5
UniRef100_A9SSG3
UniRef100_A9TF66
UniRef100_B7FIM7
UniRef100_C1E7I7
UniRef100_Q9LXC9
UniRef100_B6SQQ0
UniRef100_A7R397
UniRef100_B4FRR1
UniRef100_A9NKK1
UniRef100_Q6ZGJ8
UniRef100_C5XSW9
UniRef100_Q0OUM7
UniRef100_B8LPR8
UniRef100_A9NLE1
UniRef100_Q0DX85
UniRef100_B9RX33
UniRef100_B9HN61
UniRef100_A9PEN9
UniRef100_A4S8Q8
UniRef100_C6TF34
UniRef100_C6TLC0
UniRef100_UPI000..
UniRef100_C3KGR7
UniRef100_B9R6Q9
UniRef100_Q86M43
UniRef100_B7P6R8
UniRef100_B5X8C7
UniRef100_UPI000..
UniRef100_B5KFF6
UniRef100_B5G448
UniRef100_B5G447
UniRef100_UPI000..
UniRef100_UPI000..
UniRef100_B5G449
UniRef100_Q7SYQ9
UniRef100_B5X764
UniRef100_Q499R7
UniRef100_UPI000..
UniRef100_Q5I093
UniRef100_C1BI86
UniRef100_Q5SQT6
UniRef100_Q4R543
UniRef100_Q15181
UniRef100_UPI000..
UniRef100_Q6GN00
UniRef100_Q32NU1
UniRef100_C1BH87
UniRef100_A0PCY4
UniRef100_C1BLS3
UniRef100_B0WXH5
UniRef100_P37980
UniRef100_Q3UA53
UniRef100_Q9D819
UniRef100_Q5R8T6
UniRef100_UPI000..
UniRef100_B8MSD0
UniRef100_P13998
UniRef100_UPI000..
UniRef100_Q4SYW9
UniRef100_Q0UUY6
UniRef100_UPI000..
UniRef100_Q6PC11
UniRef100_B8PF53
UniRef100_B2A8Y6
UniRef100_Q568N9
UniRef100_B7ZD39
UniRef100_B7FT09
UniRef100_Q5TU96
UniRef100_A9V122
UniRef100_B9EQY3
UniRef100_B3MG80
UniRef100_B2WDB9
UniRef100_O77460
UniRef100_UPI000..
UniRef100_UPI000..
UniRef100_A8WV25
UniRef100_B0CRF7
UniRef100_Q18680-2
UniRef100_Q18680-3
UniRef100_Q18680
UniRef100_UPI000..
UniRef100_C3KJL2
UniRef100_Q2KIV7
UniRef100_UPI000..
UniRef100_B8C6T9
UniRef100_A9U182
UniRef100_Q6UQ31
UniRef100_A8P5I2
UniRef100_A4H3Q3
UniRef100_A4Z4U8
UniRef100_Q54PV8
UniRef100_Q9PW32
UniRef100_B7G529
UniRef100_C3XYU5
UniRef100_A7SNY2
UniRef100_B6K0W1
UniRef100_Q8BTY3
UniRef100_Q1HR16
UniRef100_Q17G61
UniRef100_Q17G60
UniRef100_B8N031
UniRef100_A1D7L0
UniRef100_UPI000..
UniRef100_C4JZQ2
UniRef100_A6R3U9
UniRef100_UPI000..
UniRef100_C5JHE6
UniRef100_Q6BWA5
UniRef100_B5E1A1
UniRef100_B4H555
UniRef100_B3NQM0
UniRef100_C6H4J5
UniRef100_C0NAJ6
UniRef100_B6QVR1
UniRef100_B0XYF3
UniRef100_A8N2Q4
UniRef100_B4PBC5
UniRef100_C9SHP3
UniRef100_A7ULH9
UniRef100_Q757J8
UniRef100_Q5KHF9
UniRef100_Q0CXF2
UniRef100_C5GHC7
UniRef100_C5DNE5
UniRef100_A2QER8
UniRef100_B5XGD7
UniRef100_B5X869
UniRef100_C5FTZ4
UniRef100_C5DPN8
UniRef100_C0S1U9
UniRef100_B6HDJ3
UniRef100_A7TEJ7
UniRef100_P00817
UniRef100_C7YHA6
UniRef100_C5M4V9
UniRef100_B9WCF5
UniRef100_P19117
UniRef100_P83777
UniRef100_UPI000..
UniRef100_B4MP06
UniRef100_Q1DPY7
UniRef100_C5PB89
UniRef100_C1GA89
UniRef100_UPI000..
UniRef100_Q4QQZ1
UniRef100_B3RW07
UniRef100_C4XX39
UniRef100_UPI000..
UniRef100_B9EPW5
UniRef100_B5XGF6
UniRef100_B5XDR2
UniRef100_Q9C0T9
UniRef100_Q6FRB7
UniRef100_UPI000..
UniRef100_UPI000..
UniRef100_UPI000..
UniRef100_UPI000..
UniRef100_Q5CQB2
UniRef100_C4M982
UniRef100_C4QV10
UniRef100_C1GQ62
UniRef100_O13505
UniRef100_UPI000..
UniRef100_UPI000..
UniRef100_C4Q469
UniRef100_B6AHT6
UniRef100_B0E6I6
UniRef100_Q2HE85
UniRef100_A1CJV8
UniRef100_Q91VM9
UniRef100_UPI000..
UniRef100_A5APQ5
UniRef100_Q7Z031
UniRef100_A5DYZ0
UniRef100_Q6C1T4
UniRef100_Q6MVH7
UniRef100_Q28H25
UniRef100_B4F6Y8
UniRef100_Q5B912
UniRef100_C1BIL9
UniRef100_Q00GL5
UniRef100_B4KQ66
UniRef100_A4RK63
UniRef100_UPI000..
UniRef100_UPI000..
UniRef100_Q6NRU5
UniRef100_B4J820
UniRef100_Q7Z029
UniRef100_Q384W3
UniRef100_D0A7N2
UniRef100_D0A7N0
UniRef100_B4LJJ5
UniRef100_A4H9T7
UniRef100_A3LTU4
UniRef100_A1DMP7
UniRef100_A4HUT3
UniRef100_UPI000..
UniRef100_Q4JH30
UniRef100_Q4D5E4
UniRef100_A5DEU1
UniRef100_UPI000..
UniRef100_Q4QH59
UniRef100_C1BTV0
UniRef100_A4HRX7
UniRef100_B0Y7N7
UniRef100_UPI000..
UniRef100_Q5DE13
UniRef100_A8Q2M8
UniRef100_C3KIN1
UniRef100_C3KGT6
UniRef100_A7EHJ1
UniRef100_UPI000..
UniRef100_Q4RJE1
UniRef100_Q4R5Y3
UniRef100_C7ZPB4
UniRef100_UPI000..
UniRef100_B4DR66
UniRef100_Q9H2U2-3
UniRef100_Q9H2U2
UniRef100_A7AQ02
UniRef100_UPI000..
UniRef100_UPI000..
UniRef100_UPI000..
UniRef100_Q9N640
UniRef100_C4WV07
UniRef100_UPI000..
UniRef100_Q57ZM8
UniRef100_C9ZKI7
UniRef100_Q4P1E3
UniRef100_UPI000..
UniRef100_UPI000..
UniRef100_UPI000..
UniRef100_C9SNW6
UniRef100_P87118
UniRef100_Q1PC59
UniRef100_C8VTJ1
UniRef100_B7XJ27
UniRef100_B6JZ51
UniRef100_Q4E611
UniRef100_C5KG67
UniRef100_Q8SR69
UniRef100_Q4DR95
UniRef100_A3LQ79
UniRef100_UPI000..
UniRef100_Q7RIN6
UniRef100_Q4N676</pre>
</div></body></html>
